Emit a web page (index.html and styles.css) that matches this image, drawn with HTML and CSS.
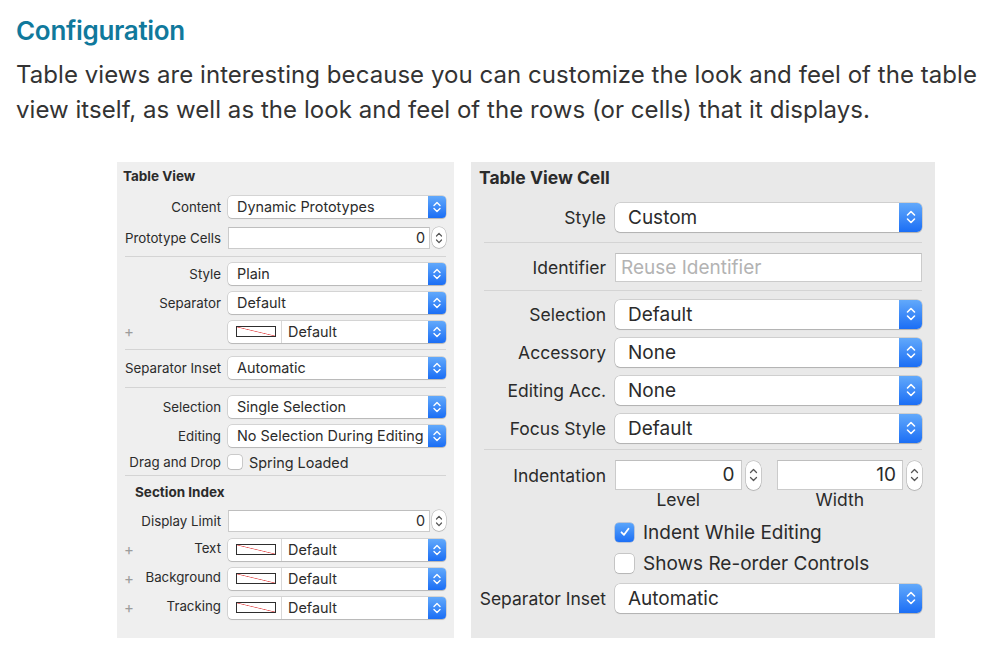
FILE: index.html
```html
<!DOCTYPE html>
<html>
<head>
<meta charset="utf-8">
<title>Configuration</title>
<link rel="stylesheet" href="styles.css">
</head>
<body>
<h1 class="title">Configuration</h1>
<p class="intro">Table views are interesting because you can customize the look and feel of the table view itself, as well as the look and feel of the rows (or cells) that it displays.</p>

<div class="panels">
  <section class="panel panel-left">
    <div class="ptitle">Table View</div>

    <div class="row mt1"><span class="lbl">Content</span>
      <div class="popup"><span class="val">Dynamic Prototypes</span><span class="arrow"><svg width="8" height="12" viewBox="0 0 8 12"><path d="M1 4.6L4 1.6L7 4.6M1 7.4L4 10.4L7 7.4" fill="none" stroke="#fff" stroke-width="1.4" stroke-linecap="round" stroke-linejoin="round"/></svg></span></div>
    </div>
    <div class="row mt2"><span class="lbl">Prototype Cells</span>
      <div class="numctl"><div class="field">0</div><span class="stepper"><svg width="8" height="16" viewBox="0 0 8 16"><path d="M1.5 6L4 3.3L6.5 6M1.5 10L4 12.7L6.5 10" fill="none" stroke="#555" stroke-width="1.2" stroke-linecap="round" stroke-linejoin="round"/></svg></span></div>
    </div>

    <div class="sep s1"></div>

    <div class="row"><span class="lbl">Style</span>
      <div class="popup"><span class="val">Plain</span><span class="arrow"><svg width="8" height="12" viewBox="0 0 8 12"><path d="M1 4.6L4 1.6L7 4.6M1 7.4L4 10.4L7 7.4" fill="none" stroke="#fff" stroke-width="1.4" stroke-linecap="round" stroke-linejoin="round"/></svg></span></div>
    </div>
    <div class="row"><span class="lbl">Separator</span>
      <div class="popup"><span class="val">Default</span><span class="arrow"><svg width="8" height="12" viewBox="0 0 8 12"><path d="M1 4.6L4 1.6L7 4.6M1 7.4L4 10.4L7 7.4" fill="none" stroke="#fff" stroke-width="1.4" stroke-linecap="round" stroke-linejoin="round"/></svg></span></div>
    </div>
    <div class="row"><span class="lbl plus"><i>+</i><span></span></span>
      <div class="popup"><span class="swwrap"><span class="swatch"></span></span><span class="val v2">Default</span><span class="arrow"><svg width="8" height="12" viewBox="0 0 8 12"><path d="M1 4.6L4 1.6L7 4.6M1 7.4L4 10.4L7 7.4" fill="none" stroke="#fff" stroke-width="1.4" stroke-linecap="round" stroke-linejoin="round"/></svg></span></div>
    </div>

    <div class="sep s2"></div>

    <div class="row"><span class="lbl">Separator Inset</span>
      <div class="popup"><span class="val">Automatic</span><span class="arrow"><svg width="8" height="12" viewBox="0 0 8 12"><path d="M1 4.6L4 1.6L7 4.6M1 7.4L4 10.4L7 7.4" fill="none" stroke="#fff" stroke-width="1.4" stroke-linecap="round" stroke-linejoin="round"/></svg></span></div>
    </div>

    <div class="sep s3"></div>

    <div class="row"><span class="lbl">Selection</span>
      <div class="popup"><span class="val">Single Selection</span><span class="arrow"><svg width="8" height="12" viewBox="0 0 8 12"><path d="M1 4.6L4 1.6L7 4.6M1 7.4L4 10.4L7 7.4" fill="none" stroke="#fff" stroke-width="1.4" stroke-linecap="round" stroke-linejoin="round"/></svg></span></div>
    </div>
    <div class="row"><span class="lbl">Editing</span>
      <div class="popup"><span class="val">No Selection During Editing</span><span class="arrow"><svg width="8" height="12" viewBox="0 0 8 12"><path d="M1 4.6L4 1.6L7 4.6M1 7.4L4 10.4L7 7.4" fill="none" stroke="#fff" stroke-width="1.4" stroke-linecap="round" stroke-linejoin="round"/></svg></span></div>
    </div>
    <div class="row short"><span class="lbl">Drag and Drop</span>
      <div class="check"><span class="box"></span><span>Spring Loaded</span></div>
    </div>

    <div class="sep s4"></div>

    <div class="ptitle sub">Section Index</div>
    <div class="row"><span class="lbl">Display Limit</span>
      <div class="numctl"><div class="field">0</div><span class="stepper"><svg width="8" height="16" viewBox="0 0 8 16"><path d="M1.5 6L4 3.3L6.5 6M1.5 10L4 12.7L6.5 10" fill="none" stroke="#555" stroke-width="1.2" stroke-linecap="round" stroke-linejoin="round"/></svg></span></div>
    </div>
    <div class="row"><span class="lbl plus"><i>+</i><span>Text</span></span>
      <div class="popup"><span class="swwrap"><span class="swatch"></span></span><span class="val v2">Default</span><span class="arrow"><svg width="8" height="12" viewBox="0 0 8 12"><path d="M1 4.6L4 1.6L7 4.6M1 7.4L4 10.4L7 7.4" fill="none" stroke="#fff" stroke-width="1.4" stroke-linecap="round" stroke-linejoin="round"/></svg></span></div>
    </div>
    <div class="row"><span class="lbl plus"><i>+</i><span>Background</span></span>
      <div class="popup"><span class="swwrap"><span class="swatch"></span></span><span class="val v2">Default</span><span class="arrow"><svg width="8" height="12" viewBox="0 0 8 12"><path d="M1 4.6L4 1.6L7 4.6M1 7.4L4 10.4L7 7.4" fill="none" stroke="#fff" stroke-width="1.4" stroke-linecap="round" stroke-linejoin="round"/></svg></span></div>
    </div>
    <div class="row"><span class="lbl plus"><i>+</i><span>Tracking</span></span>
      <div class="popup"><span class="swwrap"><span class="swatch"></span></span><span class="val v2">Default</span><span class="arrow"><svg width="8" height="12" viewBox="0 0 8 12"><path d="M1 4.6L4 1.6L7 4.6M1 7.4L4 10.4L7 7.4" fill="none" stroke="#fff" stroke-width="1.4" stroke-linecap="round" stroke-linejoin="round"/></svg></span></div>
    </div>
  </section>

  <section class="panel panel-right">
    <div class="ptitle">Table View Cell</div>

    <div class="row mt4"><span class="lbl">Style</span>
      <div class="popup"><span class="val">Custom</span><span class="arrow"><svg width="10" height="16" viewBox="0 0 10 16"><path d="M1.5 6L5 2.5L8.5 6M1.5 10L5 13.5L8.5 10" fill="none" stroke="#fff" stroke-width="1.6" stroke-linecap="round" stroke-linejoin="round"/></svg></span></div>
    </div>

    <div class="sep t1"></div>

    <div class="row"><span class="lbl">Identifier</span>
      <div class="field tfield"><span class="ph">Reuse Identifier</span></div>
    </div>

    <div class="sep t2"></div>

    <div class="row"><span class="lbl">Selection</span>
      <div class="popup"><span class="val">Default</span><span class="arrow"><svg width="10" height="16" viewBox="0 0 10 16"><path d="M1.5 6L5 2.5L8.5 6M1.5 10L5 13.5L8.5 10" fill="none" stroke="#fff" stroke-width="1.6" stroke-linecap="round" stroke-linejoin="round"/></svg></span></div>
    </div>
    <div class="row"><span class="lbl">Accessory</span>
      <div class="popup"><span class="val">None</span><span class="arrow"><svg width="10" height="16" viewBox="0 0 10 16"><path d="M1.5 6L5 2.5L8.5 6M1.5 10L5 13.5L8.5 10" fill="none" stroke="#fff" stroke-width="1.6" stroke-linecap="round" stroke-linejoin="round"/></svg></span></div>
    </div>
    <div class="row"><span class="lbl">Editing Acc.</span>
      <div class="popup"><span class="val">None</span><span class="arrow"><svg width="10" height="16" viewBox="0 0 10 16"><path d="M1.5 6L5 2.5L8.5 6M1.5 10L5 13.5L8.5 10" fill="none" stroke="#fff" stroke-width="1.6" stroke-linecap="round" stroke-linejoin="round"/></svg></span></div>
    </div>
    <div class="row"><span class="lbl">Focus Style</span>
      <div class="popup"><span class="val">Default</span><span class="arrow"><svg width="10" height="16" viewBox="0 0 10 16"><path d="M1.5 6L5 2.5L8.5 6M1.5 10L5 13.5L8.5 10" fill="none" stroke="#fff" stroke-width="1.6" stroke-linecap="round" stroke-linejoin="round"/></svg></span></div>
    </div>

    <div class="sep t3"></div>

    <div class="row indent"><span class="lbl">Indentation</span>
      <div class="pair">
        <div class="numctl"><div class="field">0</div><span class="stepper"><svg width="9" height="22" viewBox="0 0 9 22"><path d="M1.5 8.5L4.5 5.5L7.5 8.5M1.5 13.5L4.5 16.5L7.5 13.5" fill="none" stroke="#555" stroke-width="1.3" stroke-linecap="round" stroke-linejoin="round"/></svg></span></div>
        <div class="numctl"><div class="field">10</div><span class="stepper"><svg width="9" height="22" viewBox="0 0 9 22"><path d="M1.5 8.5L4.5 5.5L7.5 8.5M1.5 13.5L4.5 16.5L7.5 13.5" fill="none" stroke="#555" stroke-width="1.3" stroke-linecap="round" stroke-linejoin="round"/></svg></span></div>
      </div>
    </div>
    <div class="row caps"><span></span>
      <div class="pair"><span class="cap">Level</span><span class="cap">Width</span></div>
    </div>

    <div class="row chk c1"><span></span>
      <div class="check"><span class="box on"><svg width="12" height="12" viewBox="0 0 12 12"><path d="M2.5 6.3L5 8.8L9.5 2.8" fill="none" stroke="#fff" stroke-width="1.8" stroke-linecap="round" stroke-linejoin="round"/></svg></span><span>Indent While Editing</span></div>
    </div>
    <div class="row chk c2"><span></span>
      <div class="check"><span class="box"></span><span>Shows Re-order Controls</span></div>
    </div>

    <div class="row last"><span class="lbl">Separator Inset</span>
      <div class="popup"><span class="val">Automatic</span><span class="arrow"><svg width="10" height="16" viewBox="0 0 10 16"><path d="M1.5 6L5 2.5L8.5 6M1.5 10L5 13.5L8.5 10" fill="none" stroke="#fff" stroke-width="1.6" stroke-linecap="round" stroke-linejoin="round"/></svg></span></div>
    </div>
  </section>
</div>
</body>
</html>
```

FILE: styles.css
```css
* { box-sizing: border-box; }

body {
  margin: 0;
  padding: 15px 16px 0;
  background: #fff;
  color: #333;
  font-family: Inter, "Noto Sans", sans-serif;
}

.title {
  margin: 0;
  font-size: 26px;
  line-height: 32px;
  font-weight: 600;
  color: #10799c;
  letter-spacing: -0.3px;
}

.intro {
  margin: 10px 0 0;
  width: 975px;
  font-size: 24px;
  line-height: 35px;
  color: #333;
  letter-spacing: 0.05px;
}

.panels {
  display: flex;
  gap: 17px;
  margin: 35px 0 0 101px;
  align-items: flex-start;
}

.panel {
  height: 476px;
  display: flex;
  flex-direction: column;
  color: #2b2b2b;
}

/* ---------- left panel ---------- */
.panel-left {
  width: 337px;
  background: #efefef;
  padding: 0 8px 0 6px;
  font-size: 13.3px;
}

.panel-left .ptitle {
  height: 29px;
  line-height: 29px;
  font-weight: 700;
  font-size: 13.5px;
}
.panel-left .ptitle.sub {
  height: 27px;
  line-height: 27px;
  padding-left: 12px;
}

.row {
  display: grid;
  align-items: center;
}
.panel-left .row {
  grid-template-columns: 98px 1fr;
  column-gap: 7px;
  height: 29px;
}
.panel-left .row.short { height: 24px; }
.panel-left .mt1 { margin-top: 1px; }
.panel-left .mt2 { margin-top: 2px; }

.lbl {
  text-align: right;
  white-space: nowrap;
}
.lbl.plus {
  display: flex;
  justify-content: space-between;
  padding-left: 1px;
}
.lbl.plus i {
  font-style: normal;
  color: #9c9c9c;
  font-size: 15px;
}

.sep { height: 1px; background: #d4d4d4; }
.panel-left .sep { margin-left: 2px; }
.panel-left .s1 { margin-top: 4px; margin-bottom: 2px; }
.panel-left .s2 { margin-top: 3px; margin-bottom: 3px; }
.panel-left .s3 { margin-top: 5px; margin-bottom: 4px; }
.panel-left .s4 { margin-top: 1px; margin-bottom: 3px; }

/* popup buttons */
.popup {
  display: flex;
  align-items: center;
  background: #fff;
  border-radius: 4px;
  box-shadow: 0 0 0 0.5px rgba(0,0,0,0.22), 0 1px 1px rgba(0,0,0,0.14);
  overflow: hidden;
  white-space: nowrap;
}
.panel-left .popup { height: 22px; font-size: 14.4px; }
.panel-left .popup .val { padding-left: 9px; }
.panel-left .popup .val.v2 { padding-left: 6px; }

.arrow {
  margin-left: auto;
  height: 100%;
  display: flex;
  align-items: center;
  justify-content: center;
  background: linear-gradient(#62a9fb, #1b6ef5);
  flex: none;
}
.panel-left .arrow { width: 18px; }

.swwrap {
  width: 54px;
  height: 100%;
  border-right: 1px solid #d8d8d8;
  display: flex;
  align-items: center;
  padding-left: 8px;
  flex: none;
}
.swatch {
  width: 40px;
  height: 11px;
  border: 1.5px solid #2e2e2e;
  background: linear-gradient(to top right, transparent calc(50% - 0.7px), #e35b5b 50%, transparent calc(50% + 0.7px));
}

/* numeric fields */
.numctl {
  display: flex;
  align-items: center;
  gap: 2px;
}
.field {
  background: #fff;
  border: 1px solid #cbcbcb;
  border-top-color: #bebebe;
  white-space: nowrap;
}
.numctl .field {
  flex: 1;
  text-align: right;
  padding-right: 4px;
}
.panel-left .numctl .field { height: 22px; line-height: 20px; font-size: 14.4px; }

.stepper {
  flex: none;
  background: #fff;
  display: flex;
  align-items: center;
  justify-content: center;
  box-shadow: 0 0 0 0.5px rgba(0,0,0,0.25), 0 1px 1px rgba(0,0,0,0.1);
}
.panel-left .stepper { width: 14px; height: 21px; border-radius: 7px; }

/* checkboxes */
.check {
  display: flex;
  align-items: center;
  white-space: nowrap;
}
.box {
  flex: none;
  background: #fff;
  display: flex;
  align-items: center;
  justify-content: center;
  box-shadow: 0 0 0 0.5px rgba(0,0,0,0.3), 0 1px 1px rgba(0,0,0,0.08);
}
.panel-left .check { gap: 7px; font-size: 14.4px; }
.panel-left .box { width: 14px; height: 14px; border-radius: 3px; }

/* ---------- right panel ---------- */
.panel-right {
  width: 464px;
  background: #e9e9e9;
  padding: 0 13px 0 8px;
  font-size: 17.5px;
}
.panel-right .ptitle {
  height: 32px;
  line-height: 32px;
  font-weight: 700;
  font-size: 17.5px;
}
.panel-right .row {
  grid-template-columns: 127px 1fr;
  column-gap: 9px;
  height: 38px;
}
.panel-right .mt4 { margin-top: 4px; }
.panel-right .sep { margin-left: 5px; }
.panel-right .t1 { margin-top: 6px; margin-bottom: 5px; }
.panel-right .t2 { margin-top: 4px; margin-bottom: 4px; }
.panel-right .t3 { margin-top: 2px; margin-bottom: 7px; }

.panel-right .popup { height: 29px; border-radius: 5px; font-size: 19px; }
.panel-right .popup .val { padding-left: 13px; }
.panel-right .arrow { width: 23px; }

.tfield { height: 29px; line-height: 27px; padding-left: 5px; font-size: 19px; }
.ph { color: #b3b3b3; }

.panel-right .row.indent { height: 36px; }
.pair {
  display: grid;
  grid-template-columns: 1fr 1fr;
  column-gap: 16px;
}
.panel-right .numctl { gap: 4px; }
.panel-right .numctl .field { height: 30px; line-height: 28px; padding-right: 6px; font-size: 19px; }
.panel-right .stepper { width: 15px; height: 29px; border-radius: 8px; }

.panel-right .row.caps { height: 14px; line-height: 14px; }
.cap { text-align: center; padding-right: 19px; }

.panel-right .row.chk { height: 30px; }
.panel-right .c1 { margin-top: 10px; }
.panel-right .c2 { margin-top: 1px; }
.panel-right .check { gap: 9px; font-size: 19px; }
.panel-right .box { width: 19px; height: 19px; border-radius: 4px; }
.panel-right .row.last { margin-top: 1px; }
.box.on {
  background: linear-gradient(#5aa5fb, #1c6ff5);
  box-shadow: 0 0 0 0.5px rgba(0,60,160,0.4);
}
```
